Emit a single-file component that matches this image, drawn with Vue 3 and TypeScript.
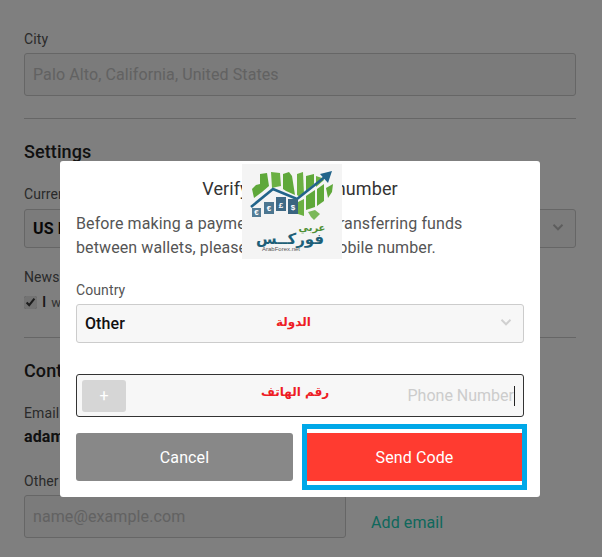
<template>
  <div class="page">
    <div class="backdrop-page">
      <label class="lbl">City</label>
      <div class="field">Palo Alto, California, United States</div>
      <hr class="rule" />
      <h3 class="section-title">Settings</h3>
      <label class="lbl">Currency</label>
      <div class="field select">
        <b>US Dollar</b>
        <svg class="chev" viewBox="0 0 16 10"><polyline points="2,2 8,8 14,2" /></svg>
      </div>
      <label class="lbl news">Newsletter</label>
      <div class="check-row">
        <input type="checkbox" checked />
        <span class="big-i">I</span>
        <span class="small">want updates</span>
      </div>
      <hr class="rule contact-rule" />
      <h3 class="section-title contact">Contact</h3>
      <label class="lbl">Email</label>
      <div class="email">adam@example.com</div>
      <label class="lbl">Other emails</label>
      <div class="email-row">
        <div class="field other-field">name@example.com</div>
        <a class="add">Add email</a>
      </div>
    </div>

    <div class="overlay"></div>

    <div class="modal">
      <h2 class="modal-title">Verify your phone number</h2>
      <p class="intro">Before making a payment or before transferring funds between wallets, please confirm a mobile number.</p>
      <label class="m-lbl">Country</label>
      <div class="m-select">
        <b>Other</b>
        <span class="ar ar-country">الدولة</span>
        <svg class="chev light" viewBox="0 0 16 10"><polyline points="2,2 8,8 14,2" /></svg>
      </div>
      <div class="m-phone">
        <span class="plus">+</span>
        <span class="ar ar-phone">رقم الهاتف</span>
        <span class="ph">Phone Number</span>
        <span class="caret"></span>
      </div>
      <div class="actions">
        <button class="btn cancel">Cancel</button>
        <div class="send-wrap"><button class="btn send">Send Code</button></div>
      </div>

      <div class="logo">
        <svg viewBox="0 0 100 95" width="100" height="95">
          <!-- map stripes -->
          <path d="M10 25 L14 21 L18 20 L18 10 L25 9 L27 22 L20 28 L12 34 Z" fill="#5fa83a" />
          <path d="M29 8 L38 9 L39 22 L34 23 L30 24 Z" fill="#6bb043" />
          <path d="M41 10 L47 8 L50 12 L53 31 L44 27 L41 25 Z" fill="#5fa83a" />
          <path d="M55 10 L61 8 L62 30 L58 33 L55 31 Z" fill="#6bb043" />
          <path d="M64 12 L72 10 L72 20 L64 27 Z" fill="#5fa83a" />
          <path d="M74 12 L80 14 L82 16 L74 23 Z" fill="#6bb043" />
          <path d="M84 24 L91 20 L90 28 L86 34 Z" fill="#5fa83a" />
          <path d="M75 25 L82 20 L82 37 L75 42 Z" fill="#5fa83a" />
          <path d="M64 32 L73 26 L73 43 L64 46 Z" fill="#5fa83a" />
          <path d="M56 38 L62 35 L62 52 L56 50 Z" fill="#6bb043" />
          <path d="M66 48 L73 46 L78 50 L74 54 L72 56 L69 53 Z" fill="#7bb85a" />
          <!-- arrow -->
          <polyline points="9,43 31,25 55,35 84,12" fill="none" stroke="#22648a" stroke-width="2.6" />
          <polygon points="90,7 78,10 86,19" fill="#22648a" />
          <!-- banknotes -->
          <rect x="10" y="44" width="9" height="9" fill="#557d96" />
          <rect x="22" y="38" width="10" height="12" fill="#4c7690" />
          <rect x="34" y="33" width="10" height="14" fill="#3f6a86" />
          <rect x="46" y="35" width="10" height="15" fill="#3a6580" />
          <text class="logo-note" x="14.5" y="51" text-anchor="middle">€</text>
          <text class="logo-note" x="27" y="47" text-anchor="middle">€</text>
          <text class="logo-note" x="39" y="44" text-anchor="middle">£</text>
          <text class="logo-note" x="51" y="46" text-anchor="middle">$</text>
          <!-- wordmark -->
          <text class="logo-ar2" x="70" y="67" text-anchor="middle" direction="rtl">عربي</text>
          <text class="logo-ar" x="48" y="80" text-anchor="middle" direction="rtl">فوركــس</text>
          <text class="logo-en" x="20" y="87">ArabForex.net</text>
        </svg>
      </div>
    </div>
  </div>
</template>

<script setup lang="ts">
</script>

<style>
html, body { margin: 0; background: #7f7f7f; }
</style>

<style scoped>
.page {
  position: relative;
  width: 602px;
  height: 557px;
  overflow: hidden;
  font-family: Roboto, "Liberation Sans", sans-serif;
  letter-spacing: 0.1px;
  background: #fff;
}

.backdrop-page {
  padding: 30px 26px 0 24px;
  color: #333;
}

.lbl {
  display: block;
  font-size: 14px;
  line-height: 18px;
  color: #555;
  margin-bottom: 5px;
}

.field {
  box-sizing: border-box;
  border: 1px solid #ccc;
  border-radius: 3px;
  height: 43px;
  line-height: 41px;
  padding-left: 8px;
  font-size: 16px;
  color: #c4c4c4;
  background: #f6f6f6;
}

.rule {
  border: none;
  border-top: 1px solid #ccc;
  margin: 22px 0;
}

.section-title {
  margin: 0 0 22px;
  font-size: 18px;
  line-height: 22px;
  font-weight: 500;
  color: #222;
}

.lbl + .select { margin-top: 6px; }

.select {
  height: 39px;
  line-height: 37px;
  color: #111;
  position: relative;
  margin-bottom: 20px;
}

.news { margin-bottom: 7px; }

.check-row {
  display: flex;
  align-items: center;
  gap: 5px;
  height: 18px;
  font-size: 13px;
}

.check-row input {
  margin: 0;
  width: 13px;
  height: 13px;
  accent-color: #e6e6e6;
}

.big-i { font-size: 15px; font-weight: 500; color: #333; }
.small { color: #666; }

.contact-rule { margin-top: 26px; }

.email {
  font-size: 16px;
  line-height: 20px;
  font-weight: 700;
  color: #222;
  margin-bottom: 25px;
}

.email-row {
  display: flex;
  align-items: center;
  gap: 25px;
}

.other-field {
  width: 322px;
  flex-shrink: 0;
}

.add { font-size: 16px; color: #20d0b8; margin-top: 12px; }

.chev {
  position: absolute;
  right: 11px;
  top: 13px;
  width: 12px;
  height: 8px;
  fill: none;
  stroke: #bbb;
  stroke-width: 2.6;
}

.chev.light { stroke: #d0d0d0; }

.overlay {
  position: absolute;
  inset: 0;
  background: rgba(0, 0, 0, 0.5);
}

.modal {
  position: absolute;
  left: 60px;
  top: 161px;
  width: 480px;
  height: 336px;
  box-sizing: border-box;
  padding: 16px 16px 0;
  background: #fff;
  border-radius: 3px;
}

.modal-title {
  margin: 0;
  font-size: 18px;
  line-height: 24px;
  font-weight: 400;
  word-spacing: -4px;
  text-align: center;
  color: #333;
}

.intro {
  margin: 11px 0 0;
  padding-right: 40px;
  font-size: 16px;
  line-height: 24px;
  color: #555;
}

.m-lbl {
  display: block;
  margin-top: 21px;
  font-size: 14px;
  line-height: 18px;
  color: #555;
}

.m-select {
  position: relative;
  box-sizing: border-box;
  height: 39px;
  margin-top: 5px;
  border: 1px solid #ccc;
  border-radius: 3px;
  background: #f7f7f7;
  line-height: 38px;
  padding-left: 8px;
  font-size: 16px;
  color: #111;
}

.m-select b { font-weight: 500; }

.ar {
  position: absolute;
  font-family: "DejaVu Sans", "Noto Sans", sans-serif;
  font-weight: 700;
  font-size: 12px;
  letter-spacing: 0;
  color: #ee1c25;
}

.ar-country { left: 199px; top: -2px; }

.m-phone {
  position: relative;
  box-sizing: border-box;
  height: 43px;
  margin-top: 31px;
  border: 1px solid #333;
  border-radius: 3px;
  background: #f7f7f7;
  display: flex;
  align-items: center;
  padding: 0 8px 0 5px;
}

.plus {
  width: 44px;
  height: 32px;
  background: #d6d6d6;
  border-radius: 3px;
  color: #fff;
  font-size: 16px;
  line-height: 32px;
  text-align: center;
}

.ar-phone { left: 184px; top: 10px; }

.ph {
  margin-left: auto;
  font-size: 16px;
  letter-spacing: 0;
  color: #ccc;
}

.caret {
  width: 1px;
  height: 20px;
  background: #222;
}

.actions {
  display: flex;
  justify-content: space-between;
  align-items: center;
  margin-top: 16px;
}

.btn {
  border: none;
  color: #fff;
  font-family: inherit;
  font-size: 16px;
  letter-spacing: inherit;
  height: 48px;
}

.cancel {
  width: 217px;
  background: #888;
  border-radius: 3px;
}

.send-wrap {
  box-sizing: border-box;
  width: 225px;
  margin: -9px -3px -9px 0;
  padding: 4px 0;
  border: 5px solid #00a8e8;
}

.send {
  display: block;
  width: 100%;
  background: #ff3b30;
}

.logo {
  position: absolute;
  left: 182px;
  top: 3px;
  width: 100px;
  height: 95px;
  background: #f4f4f4;
}

.logo-note {
  font-family: "Liberation Sans", sans-serif;
  font-size: 8px;
  font-weight: 700;
  fill: #fff;
}

.logo-ar {
  font-family: "DejaVu Sans", sans-serif;
  font-size: 15px;
  font-weight: 700;
  fill: #1d5f78;
}

.logo-ar2 {
  font-family: "DejaVu Sans", sans-serif;
  font-size: 10px;
  font-weight: 700;
  fill: #4f8f35;
}

.logo-en {
  font-family: "Liberation Sans", sans-serif;
  font-size: 6px;
  letter-spacing: 0;
  fill: #555;
}
</style>
